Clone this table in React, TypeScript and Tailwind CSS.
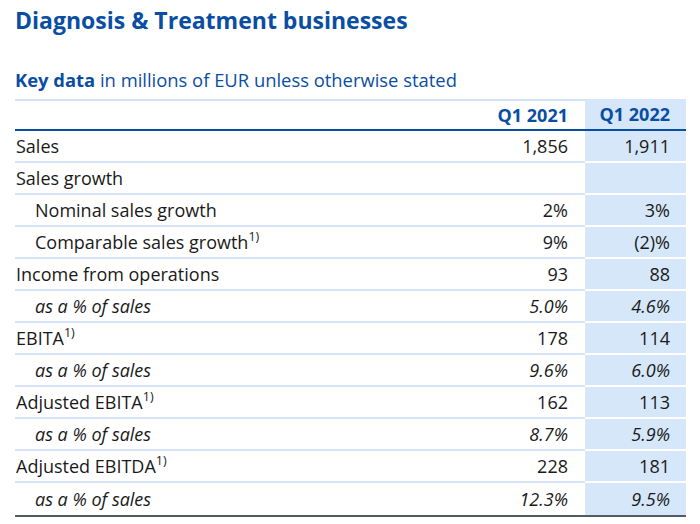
import React from "react";

type Row = { label: string; sup?: boolean; indent?: boolean; italic?: boolean; a: string; b: string };

const rows: Row[] = [
  { label: "Sales", a: "1,856", b: "1,911" },
  { label: "Sales growth", a: "", b: "" },
  { label: "Nominal sales growth", indent: true, a: "2%", b: "3%" },
  { label: "Comparable sales growth", indent: true, sup: true, a: "9%", b: "(2)%" },
  { label: "Income from operations", a: "93", b: "88" },
  { label: "as a % of sales", indent: true, italic: true, a: "5.0%", b: "4.6%" },
  { label: "EBITA", sup: true, a: "178", b: "114" },
  { label: "as a % of sales", indent: true, italic: true, a: "9.6%", b: "6.0%" },
  { label: "Adjusted EBITA", sup: true, a: "162", b: "113" },
  { label: "as a % of sales", indent: true, italic: true, a: "8.7%", b: "5.9%" },
  { label: "Adjusted EBITDA", sup: true, a: "228", b: "181" },
  { label: "as a % of sales", indent: true, italic: true, a: "12.3%", b: "9.5%" },
];

export default function App() {
  return (
    <div
      className="w-[700px] h-[524px] bg-white text-[#1a1a1a] overflow-hidden"
      style={{ fontFamily: '"Open Sans", "Noto Sans", sans-serif' }}
    >
      <div className="pl-[15px] pr-[14px]">
        <h1 className="text-[#0a4ea3] font-bold text-[23px] leading-[28px] pt-[6px]">
          Diagnosis &amp; Treatment businesses
        </h1>
        <div className="mt-[35px] text-[#0a4ea3] text-[18.4px] leading-[22px]">
          <span className="font-bold">Key data</span> in millions of EUR unless otherwise stated
        </div>
        <div className="mt-[8px] text-[18px]">
          <div className="grid grid-cols-[1fr_100px_2px_101px] h-[32px] border-b-2 border-[#0a4ea3]">
            <div className="border-t-2 border-[#d3e4f7]" />
            <div className="border-t-2 border-[#d3e4f7] flex items-center justify-end pr-[15px] font-bold text-[#0a4ea3]">
              Q1 2021
            </div>
            <div className="border-t-2 border-[#d3e4f7]" />
            <div className="bg-[#d6e7f9] flex items-center justify-end pr-[16px] font-bold text-[#0a4ea3]">
              Q1 2022
            </div>
          </div>
          {rows.map((r, i) => {
            const last = i === rows.length - 1;
            const sep = last ? "" : "border-b-2";
            return (
              <div key={i} className="grid grid-cols-[1fr_100px_2px_101px] h-[32px]">
                <div
                  className={`${sep} border-[#d3e4f7] flex items-center ${r.indent ? "pl-[20px]" : "pl-[1px]"} ${r.italic ? "italic" : ""}`}
                >
                  <span>
                    {r.label}
                    {r.sup && (
                      <span className="text-[12.5px] relative top-[-8px] leading-none">1)</span>
                    )}
                  </span>
                </div>
                <div className={`${sep} border-[#d3e4f7] flex items-center justify-end pr-[15px] ${r.italic ? "italic" : ""}`}>
                  {r.a}
                </div>
                <div className={`${sep} border-[#d3e4f7]`} />
                <div className={`${sep} border-white bg-[#d6e7f9] flex items-center justify-end pr-[16px] ${r.italic ? "italic" : ""}`}>
                  {r.b}
                </div>
              </div>
            );
          })}
          <div className="h-[2px] bg-[#555a60]" />
        </div>
      </div>
    </div>
  );
}
